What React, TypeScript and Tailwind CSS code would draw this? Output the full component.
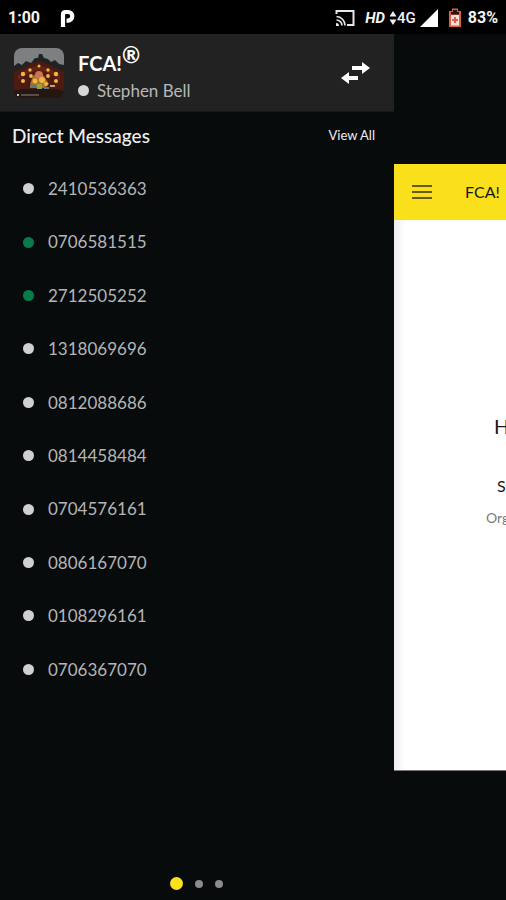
const contacts = [
  { id: "2410536363", online: false },
  { id: "0706581515", online: true },
  { id: "2712505252", online: true },
  { id: "1318069696", online: false },
  { id: "0812088686", online: false },
  { id: "0814458484", online: false },
  { id: "0704576161", online: false },
  { id: "0806167070", online: false },
  { id: "0108296161", online: false },
  { id: "0706367070", online: false },
];

function Avatar() {
  return (
    <svg viewBox="0 0 50 50" className="size-[50px] shrink-0 rounded-lg" role="img" aria-label="Workspace picture">
      <rect width="50" height="50" fill="#301610" />
      <rect width="50" height="24" fill="#7d8081" />
      <path d="M0 18l4-3 4 2 4-4 5 2 4-5 3 0 1-4 3 0 2 4 4 1 3 3 4-2 4 4 5 1v9H0z" fill="#1f2322" />
      <path d="M0 24l9-4 7-4 9-3 9 3 8 4 8 4v22H0z" fill="#4b1a10" />
      <path d="M4 27l10-6 11-4 11 4 10 6v5l-10-6-11-4-11 4-10 6z" fill="#64221a" />
      <path d="M0 43l8-2h34l8 2v7H0z" fill="#241712" />
      <path d="M16 36l3-8 5-4 6 4 5 8-4 4H20z" fill="#a9702a" />
      <circle cx="25" cy="27" r="4" fill="#cc7350" />
      <g fill="#efb743">
        <circle cx="25" cy="18" r="1.500" />
        <circle cx="16" cy="22" r="1.700" />
        <circle cx="34" cy="22" r="1.700" />
        <circle cx="9" cy="26" r="2.200" />
        <circle cx="42" cy="26" r="2.200" />
        <circle cx="9" cy="33" r="2" />
        <circle cx="42" cy="33" r="2" />
        <circle cx="17" cy="28" r="1.900" />
        <circle cx="34" cy="28" r="1.900" />
        <circle cx="21" cy="33" r="2.500" />
        <circle cx="28" cy="32" r="3" />
        <circle cx="32" cy="36" r="2" />
      </g>
      <path d="M16 37h6l2 3h-8zM30 39h5v2h-5z" fill="#557e84" />
      <path d="M23 36h5v5h-5z" fill="#94a640" />
      <path d="M36 37h5v2h-5z" fill="#c99e7b" />
      <circle cx="4" cy="47" r="1" fill="#fff" />
      <path d="M7 47h18" stroke="#8c8480" strokeWidth="1" />
    </svg>
  );
}

function StatusBar() {
  return (
    <header className="flex h-[34px] shrink-0 items-center bg-black px-2 pt-0.5 font-['Roboto',sans-serif] text-base font-bold text-gray-100">
      <time>1:00</time>
      <svg viewBox="0 0 16 19" className="ml-5 h-[19px] w-4" aria-hidden="true">
        <path
          d="M3 18V5.500Q3 3 5.500 3H8a4.200 4.200 0 0 1 0 8.600H6.500"
          fill="none"
          stroke="#fff"
          strokeWidth="4.200"
        />
      </svg>
      <div className="ml-auto flex items-center">
        <svg viewBox="0 0 20 18" className="h-[18px] w-5" fill="none" stroke="#e8e8e8" aria-hidden="true">
          <path d="M1.500 5V2h17v14H12" strokeWidth="2" />
          <path d="M1.500 7.500A9 9 0 0 1 10 16.500M1.500 11a5.500 5.500 0 0 1 5.500 5.500" strokeWidth="1.600" />
          <path d="M1 14a3 3 0 0 1 3 3H1z" fill="#e8e8e8" stroke="none" />
        </svg>
        <span className="ml-2.5 text-[15px] italic">HD</span>
        <svg viewBox="0 0 8 14" className="ml-1 h-3.5 w-2" fill="#eee" aria-hidden="true">
          <path d="M4 0l3.500 5.500h-7zM4 14L.5 8.500h7z" />
        </svg>
        <span className="text-[15px] font-medium">4G</span>
        <svg viewBox="0 0 18 18" className="ml-1 size-[18px]" fill="#fff" aria-hidden="true">
          <path d="M18 0v18H0z" />
        </svg>
        <svg viewBox="0 0 14 20" className="mr-1.5 ml-2.5 h-5 w-3.5" aria-hidden="true">
          <path d="M4 .5h6V3h3v16H1V3h3z" fill="#dc6045" />
          <path d="M3 7h8v10.500H3z" fill="#f6ddd5" />
          <path d="M5 2h4v2h2v2.500H3V4h2z" fill="#241512" />
          <path d="M6 9h2v2h2v2H8v2H6v-2H4v-2h2z" fill="#dc6045" />
        </svg>
        <span>83%</span>
      </div>
    </header>
  );
}

function Drawer() {
  return (
    <aside className="flex min-w-0 flex-1 flex-col">
      <div className="flex h-[78px] shrink-0 items-center border-b border-[#181818] bg-[#222222] px-3.5">
        <Avatar />
        <div className="ml-3.5 flex flex-col pt-1">
          <h1 className="flex h-8 items-center text-xl leading-8 font-bold text-white">
            FCA!<span className="mb-4 text-[22px]">®</span>
          </h1>
          <p className="flex h-6 items-center gap-2 text-[17px] leading-6 text-[#b8b8b8]">
            <span className="size-[11px] rounded-full bg-[#d6d6d6]" />
            Stephen Bell
          </p>
        </div>
        <button type="button" aria-label="Switch workspace" className="mr-2.5 ml-auto">
          <svg viewBox="0 0 30 22" className="h-[22px] w-[30px]" fill="#fff" aria-hidden="true">
            <path d="M12 4h10V0l8 6-8 6V8H12zM18 14H9v-4l-8 6 8 6v-4h9z" />
          </svg>
        </button>
      </div>
      <div className="flex h-[50px] shrink-0 items-center justify-between pr-[19px] pb-0.5 pl-3">
        <h2 className="text-[19px] font-medium text-[#f0f0f0]">Direct Messages</h2>
        <a href="#all" className="text-[13px] text-[#eeeeee]">View All</a>
      </div>
      <ul className="grid h-[534px] auto-rows-fr">
        {contacts.map((c) => (
          <li key={c.id}>
            <a href={"#" + c.id} className="flex h-full items-center gap-3.5 pl-[23px] text-[17px] text-[#b5b5b5]">
              <span className={c.online ? "size-[11px] rounded-full bg-[#077c4b]" : "size-[11px] rounded-full bg-[#d0d0d2]"} />
              {c.id}
            </a>
          </li>
        ))}
      </ul>
      <nav aria-label="Drawer pages" className="mt-auto mb-2.5 flex items-center justify-center gap-3 pr-0.5">
        <button type="button" aria-label="Page 1" className="size-[13px] rounded-full bg-[#fbe01b]" />
        <button type="button" aria-label="Page 2" className="size-2 rounded-full bg-[#8b8b8b]" />
        <button type="button" aria-label="Page 3" className="size-2 rounded-full bg-[#8b8b8b]" />
      </nav>
    </aside>
  );
}

function ChatPage() {
  return (
    <main className="mt-[130px] mb-[129px] flex w-28 shrink-0 flex-col overflow-hidden border-b border-[#777777] bg-white whitespace-nowrap text-[#171717]">
      <div className="flex h-14 shrink-0 items-center gap-[33px] bg-[#fadf1b] pl-[18px]">
        <button type="button" aria-label="Open menu">
          <svg viewBox="0 0 20 14" className="h-3.5 w-5" stroke="#665b16" strokeWidth="2" aria-hidden="true">
            <path d="M0 1h20M0 7h20M0 13h20" />
          </svg>
        </button>
        <span className="text-base">FCA!</span>
      </div>
      <div className="flex flex-1 flex-col bg-linear-to-r from-[#eeeeee] to-white to-10% pt-[194px]">
        <h2 className="pl-[100px] text-xl leading-6">H</h2>
        <h3 className="mt-9 pl-[103px] text-base leading-6">S</h3>
        <p className="mt-2 pl-[92px] text-sm leading-6 text-[#777b7b]">Org</p>
      </div>
    </main>
  );
}

export default function App() {
  return (
    <div className="flex min-h-screen flex-col overflow-hidden bg-[#080b0c] font-['Lato',sans-serif]">
      <StatusBar />
      <div className="flex flex-1">
        <Drawer />
        <ChatPage />
      </div>
    </div>
  );
}
